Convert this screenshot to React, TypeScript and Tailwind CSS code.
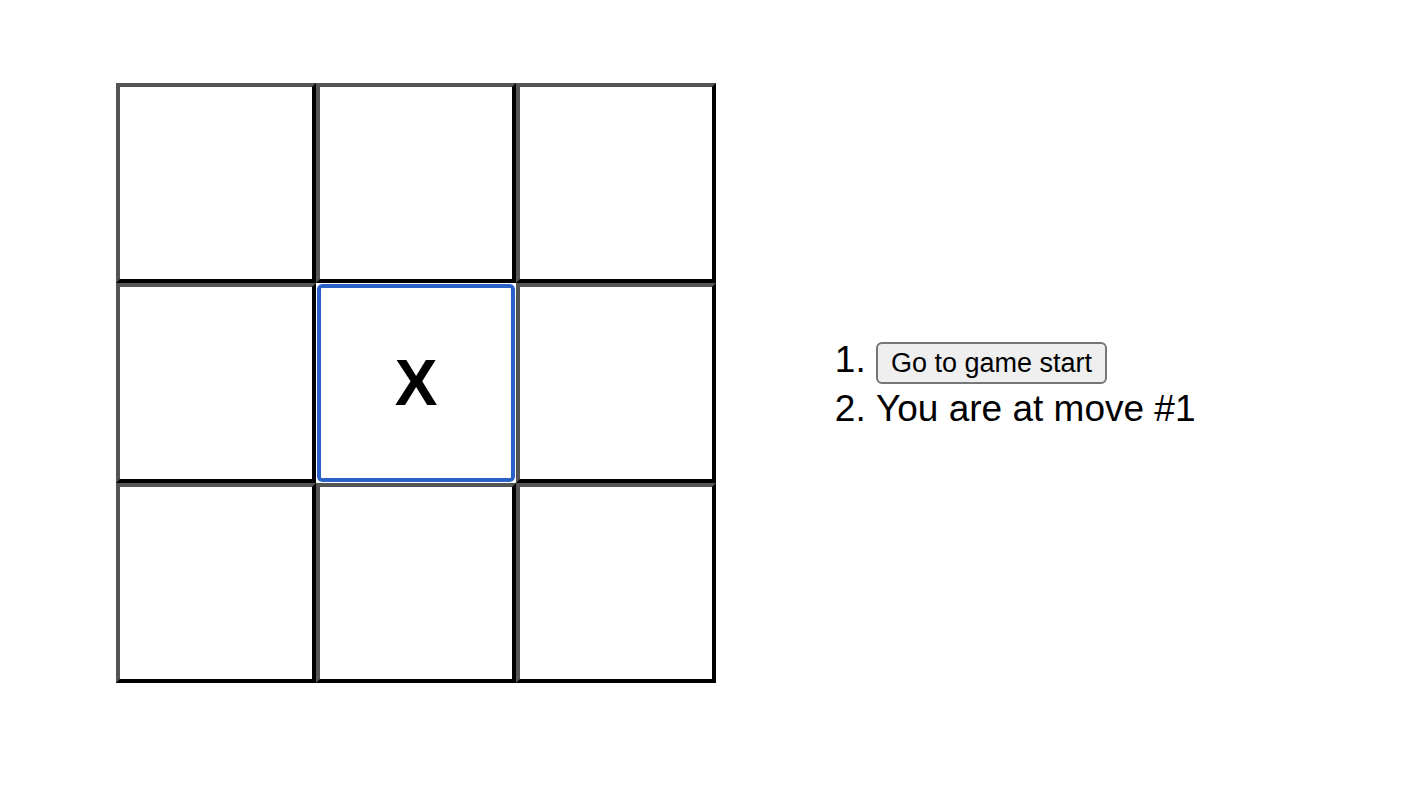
import React from "react";

const cells = ["", "", "", "", "X", "", "", "", ""];

export default function App() {
  return (
    <div className="min-h-[808px] w-[1418px] bg-white font-['Liberation_Sans',Arial,sans-serif] text-black">
      <div className="flex items-center pl-[116px] pt-[83px]">
        <div className="grid grid-cols-[200px_200px_200px] grid-rows-[200px_200px_200px] bg-white">
          {cells.map((v, i) =>
            i === 4 ? (
              <button
                key={i}
                className="flex h-[200px] w-[200px] items-center justify-center rounded-[6px] border border-white bg-white p-0 text-[64px] font-bold leading-none shadow-[inset_0_0_0_4px_#2a62c9]"
              >
                {v}
              </button>
            ) : (
              <button
                key={i}
                className="flex h-[200px] w-[200px] items-center justify-center border-4 border-t-[#545454] border-l-[#545454] border-r-black border-b-black bg-white p-0 text-[64px] font-bold leading-none"
              >
                {v}
              </button>
            )
          )}
        </div>
        <div className="ml-[80px]">
          <ol className="list-decimal pl-[80px] pt-[2px] text-[37px] leading-[49px]">
            <li>
              <button className="inline-block h-[42px] rounded-[6px] border-2 border-[#767676] bg-[#efefef] px-[13px] align-baseline text-[27px] leading-[normal] text-black">
                Go to game start
              </button>
            </li>
            <li>You are at move #1</li>
          </ol>
        </div>
      </div>
    </div>
  );
}
